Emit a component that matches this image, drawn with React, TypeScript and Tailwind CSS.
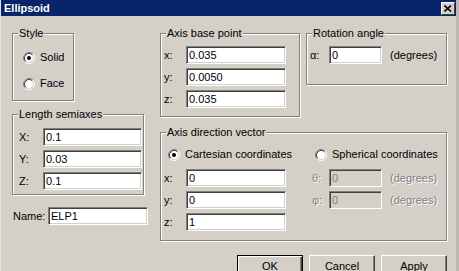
import React from 'react';

const font = { fontFamily: '"Liberation Sans", Arial, sans-serif' };

const Radio: React.FC<{ checked?: boolean }> = ({ checked }) => (
  <svg width="12" height="12" viewBox="0 0 12 12" className="shrink-0">
    <circle cx="6" cy="6" r="4.5" fill="#fff" />
    <path d="M2.11 9.89 A5.5 5.5 0 0 1 9.89 2.11" fill="none" stroke="#808080" />
    <path d="M9.89 2.11 A5.5 5.5 0 0 1 2.11 9.89" fill="none" stroke="#fff" />
    <path d="M2.82 9.18 A4.5 4.5 0 0 1 9.18 2.82" fill="none" stroke="#404040" />
    <path d="M9.18 2.82 A4.5 4.5 0 0 1 2.82 9.18" fill="none" stroke="#d4d0c8" />
    {checked && <circle cx="6" cy="6" r="2" fill="#000" />}
  </svg>
);

const Field: React.FC<{ value: string; width: string; disabled?: boolean }> = ({ value, width, disabled }) => (
  <input
    readOnly
    disabled={disabled}
    defaultValue={value}
    className={`${width} h-[18px] px-[2px] text-[11px] leading-none outline-none border border-t-[#808080] border-l-[#808080] border-r-white border-b-white shadow-[inset_1px_1px_0_#404040,inset_-1px_-1px_0_#d4d0c8] ${
      disabled ? 'bg-[#d4d0c8] text-[#808080]' : 'bg-white text-black'
    }`}
  />
);

const Group: React.FC<{ title: string; className: string; children: React.ReactNode }> = ({
  title,
  className,
  children,
}) => (
  <fieldset
    className={`${className} border border-[#808080] shadow-[inset_1px_1px_0_#fff,1px_1px_0_#fff]`}
  >
    <legend className="ml-[5px] px-[1px] leading-[13px] bg-[#d4d0c8]">{title}</legend>
    {children}
  </fieldset>
);

const Row: React.FC<{ label: string; value: string; labelW: string; inputW: string }> = ({
  label,
  value,
  labelW,
  inputW,
}) => (
  <div className="flex items-center h-[18px]">
    <span className={labelW}>{label}</span>
    <Field value={value} width={inputW} />
  </div>
);

const Button: React.FC<{ label: string; def?: boolean }> = ({ label, def }) => (
  <button
    className={`w-[66px] h-[23px] bg-[#d4d0c8] text-[11px] text-black border ${
      def
        ? 'border-black shadow-[inset_1px_1px_0_#fff,inset_-1px_-1px_0_#404040,inset_-2px_-2px_0_#808080]'
        : 'border-t-white border-l-white border-r-[#404040] border-b-[#404040] shadow-[inset_-1px_-1px_0_#808080]'
    }`}
  >
    {label}
  </button>
);

const dis = 'text-[#808080] [text-shadow:1px_1px_0_#fff]';

export default function App() {
  return (
    <div
      style={font}
      className="w-[459px] h-[271px] overflow-hidden bg-[#d4d0c8] text-[11px] text-black border-l border-l-[#e4e2dc] border-r-[3px] border-r-[#bdb9b1]"
    >
      <div className="h-[16px] bg-[#0a246a] flex items-center justify-between pl-[3px] pr-[1px]">
        <span className="text-white font-bold text-[11px] leading-none">Ellipsoid</span>
        <div className="w-[14px] h-[13px] bg-[#d4d0c8] border border-t-white border-l-white border-r-[#404040] border-b-[#404040] flex items-center justify-center">
          <svg width="8" height="7" viewBox="0 0 8 7">
            <path d="M0.5 0.5 L7 6.5 M7 0.5 L0.5 6.5" stroke="#000" strokeWidth="1.6" />
          </svg>
        </div>
      </div>

      <div className="flex pl-[11px] pt-[11px] gap-[12px]">
        {/* left column */}
        <div className="w-[136px] flex flex-col">
          <Group title="Style" className="w-[62px] h-[74px]">
            <div className="flex flex-col gap-[13px] pt-[11px] pl-[10px]">
              <div className="flex items-center h-[13px] gap-[5px]">
                <Radio checked />
                <span>Solid</span>
              </div>
              <div className="flex items-center h-[13px] gap-[5px]">
                <Radio />
                <span>Face</span>
              </div>
            </div>
          </Group>

          <Group title="Length semiaxes" className="mt-[7px] w-[132px] h-[87px]">
            <div className="flex flex-col gap-[4px] pt-[7px] pl-[6px]">
              <Row label="X:" value="0.1" labelW="w-[24px]" inputW="w-[99px]" />
              <Row label="Y:" value="0.03" labelW="w-[24px]" inputW="w-[99px]" />
              <Row label="Z:" value="0.1" labelW="w-[24px]" inputW="w-[99px]" />
            </div>
          </Group>

          <div className="mt-[12px] flex items-center h-[18px] pl-[1px]">
            <span className="w-[36px]">Name:</span>
            <Field value="ELP1" width="w-[100px]" />
          </div>
        </div>

        {/* right column */}
        <div className="w-[287px] flex flex-col">
          <div className="flex items-start gap-[6px]">
            <Group title="Axis base point" className="w-[140px] h-[90px]">
              <div className="flex flex-col gap-[4px] pt-[6px] pl-[3px]">
                <Row label="x:" value="0.035" labelW="w-[22px]" inputW="w-[100px]" />
                <Row label="y:" value="0.0050" labelW="w-[22px]" inputW="w-[100px]" />
                <Row label="z:" value="0.035" labelW="w-[22px]" inputW="w-[100px]" />
              </div>
            </Group>
            <Group title="Rotation angle" className="w-[141px] h-[58px]">
              <div className="flex items-center h-[18px] mt-[6px] pl-[3px]">
                <span className="w-[19px]">α:</span>
                <Field value="0" width="w-[53px]" />
                <span className="ml-[8px]">(degrees)</span>
              </div>
            </Group>
          </div>

          <Group title="Axis direction vector" className="mt-[9px] w-[287px] h-[115px]">
            <div className="flex flex-col pt-[9px] pl-[3px]">
              <div className="flex items-center h-[13px]">
                <div className="w-[148px] flex items-center gap-[5px] pl-[4px]">
                  <Radio checked />
                  <span>Cartesian coordinates</span>
                </div>
                <div className="flex items-center gap-[5px] pl-[3px]">
                  <Radio />
                  <span>Spherical coordinates</span>
                </div>
              </div>
              <div className="flex flex-col gap-[4px] mt-[8px]">
                <div className="flex items-center h-[18px]">
                  <span className="w-[22px]">x:</span>
                  <Field value="0" width="w-[100px]" />
                  <span className={`ml-[26px] w-[17px] ${dis}`}>θ:</span>
                  <Field value="0" width="w-[53px]" disabled />
                  <span className={`ml-[8px] ${dis}`}>(degrees)</span>
                </div>
                <div className="flex items-center h-[18px]">
                  <span className="w-[22px]">y:</span>
                  <Field value="0" width="w-[100px]" />
                  <span className={`ml-[26px] w-[17px] ${dis}`}>φ:</span>
                  <Field value="0" width="w-[53px]" disabled />
                  <span className={`ml-[8px] ${dis}`}>(degrees)</span>
                </div>
                <div className="flex items-center h-[18px]">
                  <span className="w-[22px]">z:</span>
                  <Field value="1" width="w-[100px]" />
                </div>
              </div>
            </div>
          </Group>

          <div className="mt-[14px] flex justify-end gap-[6px]">
            <Button label="OK" def />
            <Button label="Cancel" />
            <Button label="Apply" />
          </div>
        </div>
      </div>
    </div>
  );
}
